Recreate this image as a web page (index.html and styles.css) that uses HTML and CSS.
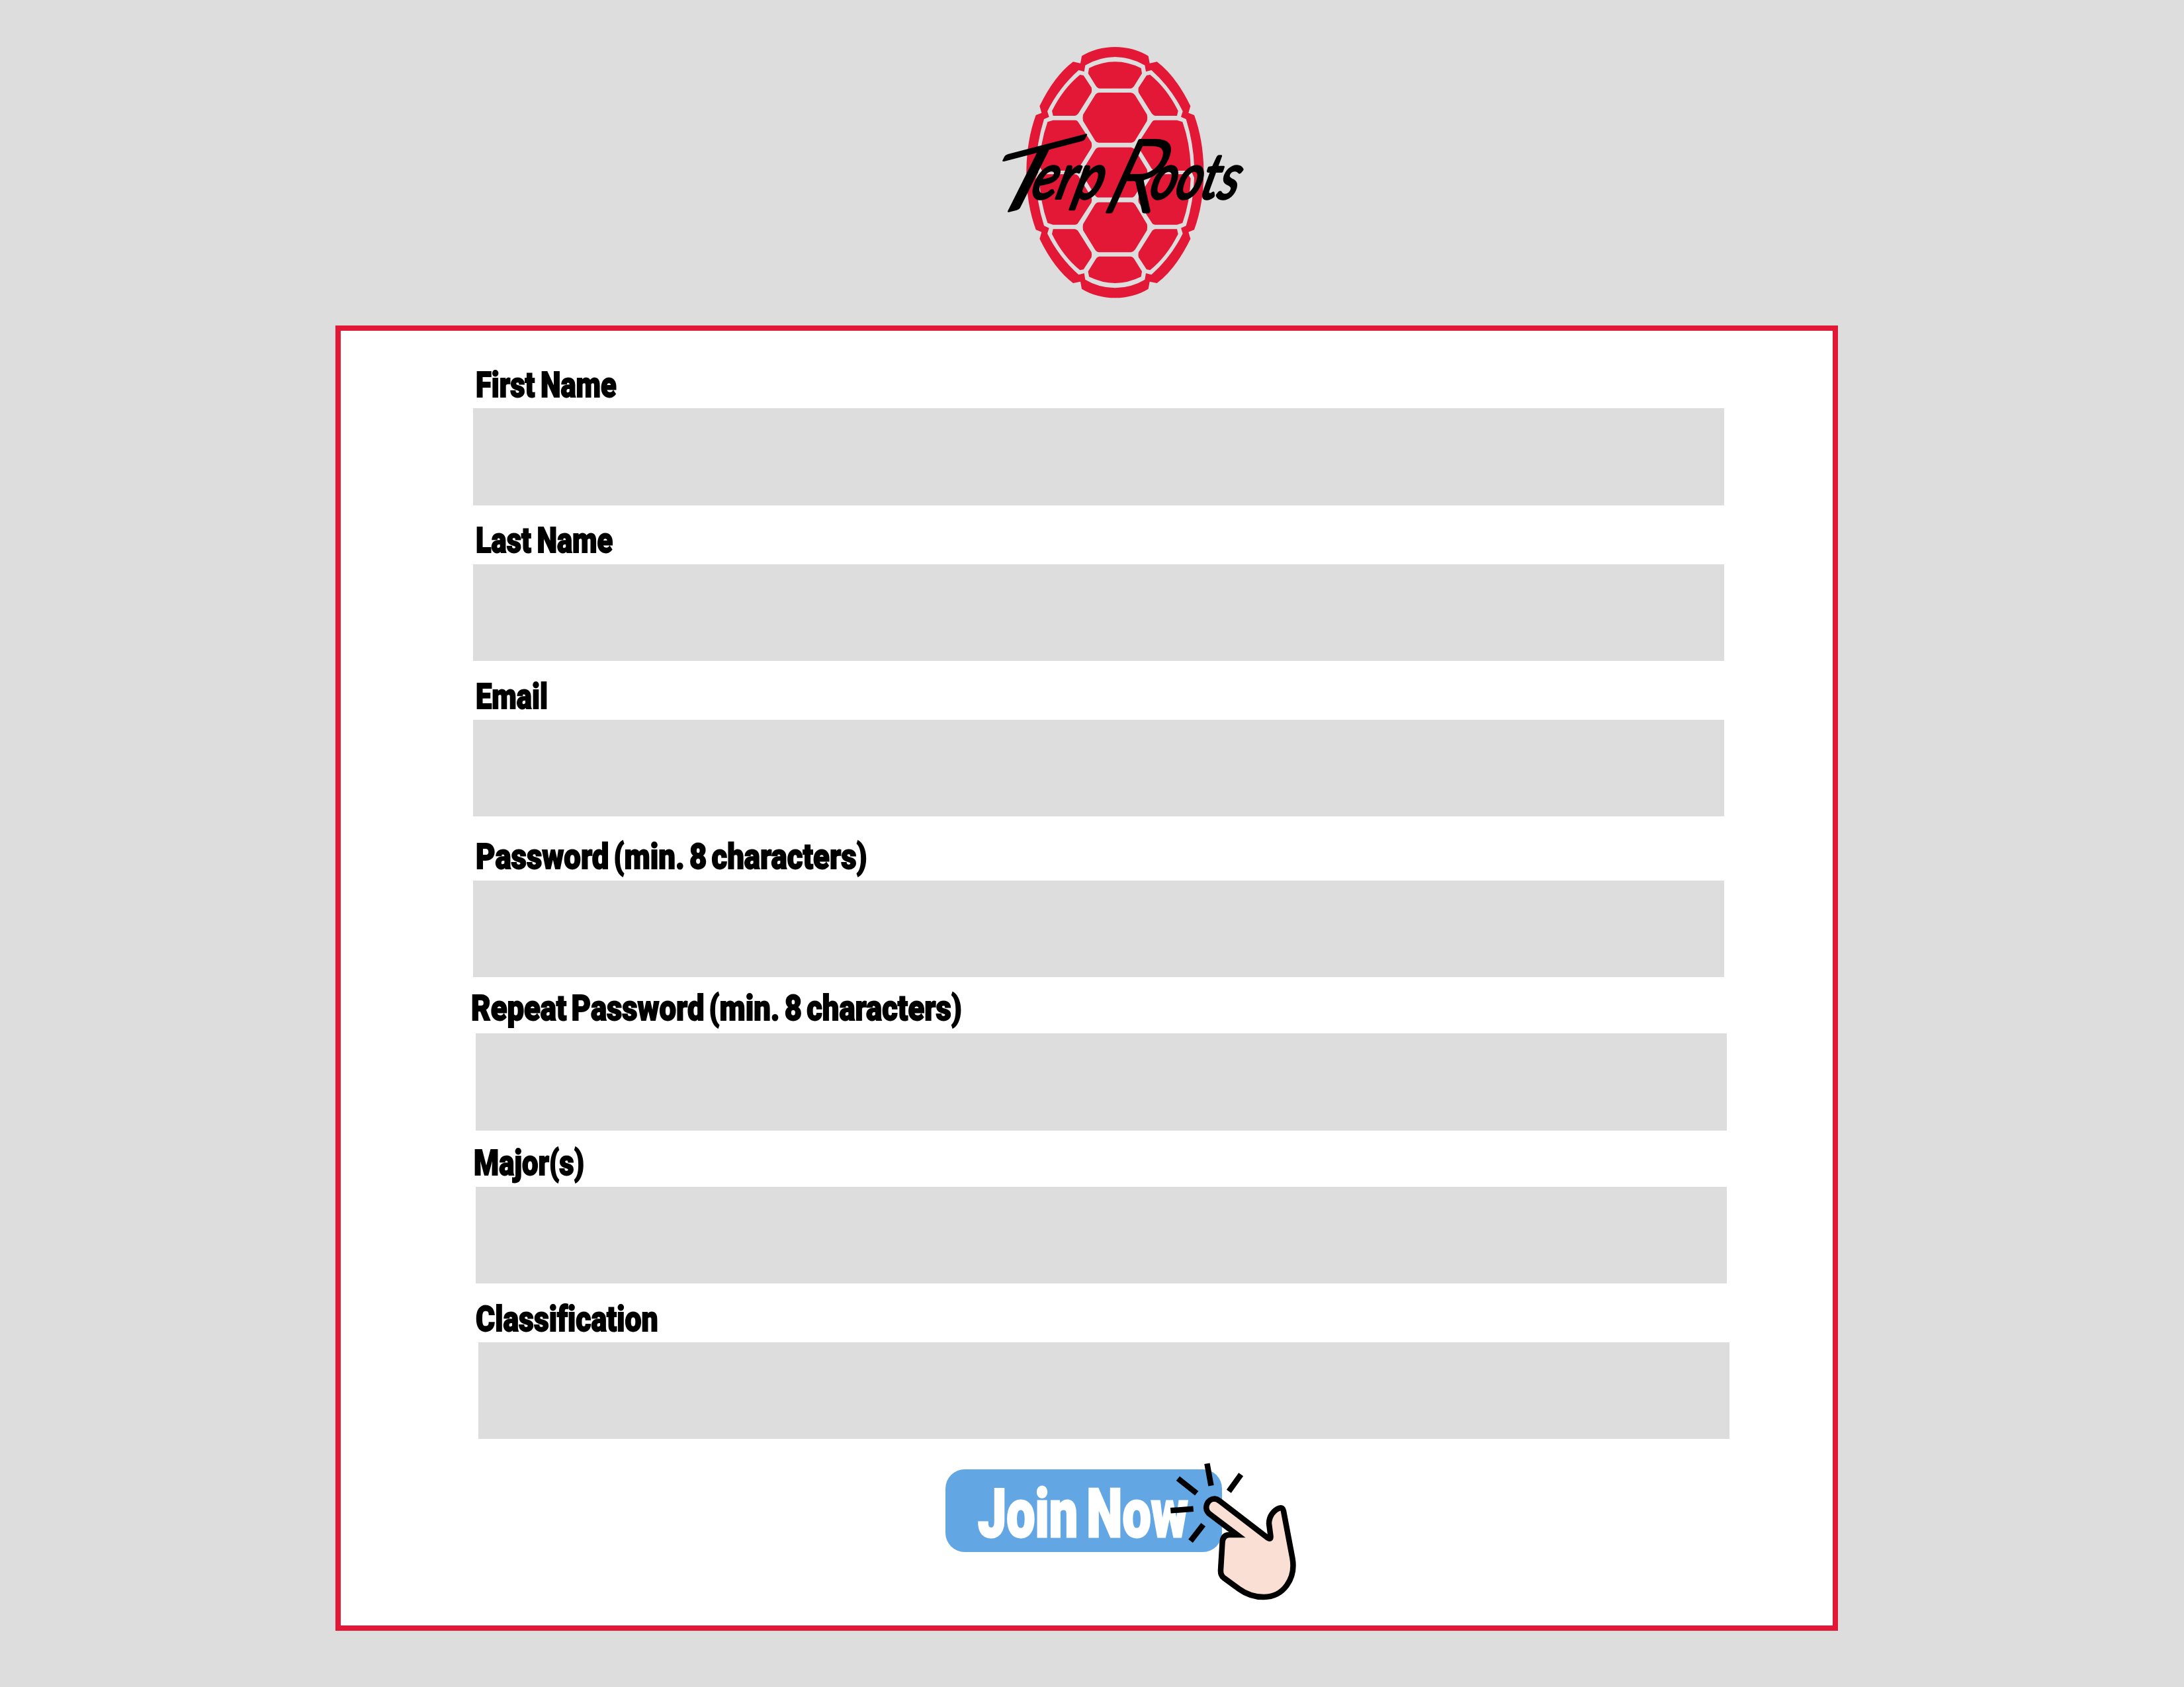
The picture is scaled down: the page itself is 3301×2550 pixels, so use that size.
FILE: index.html
```html
<!DOCTYPE html>
<html lang="en">
<head>
<meta charset="utf-8">
<title>TerpRoots – Join</title>
<link rel="stylesheet" href="styles.css">
</head>
<body>
<header class="masthead">
  <svg class="logo" viewBox="0 0 1200 1200" role="img" aria-label="TerpRoots">
    <defs>
      <g id="half">
        <path class="red" d="M557 33Q470 34 405 74L399 107L366 100Q280 165 214 301L223 332L197 342Q154 460 154 603H557Z"/>
        <path class="gap" d="M557 78Q480 80 421 116L416 145L391 138Q300 220 249 325L257 350L234 360Q200 470 197 578L208 603H557Z"/>
        <path class="red" d="M413 162L449 217Q452 228 449 240L390 334Q382 345 372 345H275L270 323Q320 222 397 159Z"/>
        <path class="red" d="M275 365H375Q385 365 390 375L449 466Q452 478 449 490L390 585Q383 594 372 594H225L213 575Q216 470 250 373Z"/>
      </g>
      <g id="top">
        <use href="#half"/>
        <use href="#half" transform="matrix(-1 0 0 1 1112 0)"/>
        <path class="red" d="M438 129Q556 71 674 129L678 153L644 208Q637 220 627 221H485Q475 220 468 208L434 153Z"/>
        <path id="hex" class="red" d="M485 240H628Q640 242 647 252L701 340Q704 354 701 368L647 457Q640 467 630 467H482Q472 467 465 457L411 368Q408 354 411 340L465 252Q472 240 485 240Z"/>
      </g>
    </defs>
    <use href="#top"/>
    <use href="#top" transform="matrix(1 0 0 -1 0 1204)"/>
    <use href="#hex" transform="translate(0 248.500)"/>
    <g class="script">
      <text class="cap" transform="matrix(.96 -.25 -.465 .93 -88 818)" textLength="385" lengthAdjust="spacingAndGlyphs">T</text>
      <text class="low" transform="translate(168 720) skewX(-15)" textLength="320" lengthAdjust="spacingAndGlyphs">erp</text>
      <text class="cap big" transform="matrix(1 0 -.42 .93 480 780)" textLength="235" lengthAdjust="spacingAndGlyphs">R</text>
      <text class="low" transform="translate(704 720) skewX(-15)" textLength="400" lengthAdjust="spacingAndGlyphs">oots</text>
    </g>
  </svg>
</header>
<main class="card">
  <form class="form">
    <div class="field f1"><label for="a"><span>First Name</span></label><input id="a"></div>
    <div class="field f2"><label for="b"><span>Last Name</span></label><input id="b"></div>
    <div class="field f3"><label for="c"><span>Email</span></label><input id="c"></div>
    <div class="field f4"><label for="d"><span>Password (min. 8 characters)</span></label><input id="d"></div>
    <div class="field f5"><label for="e"><span>Repeat Password (min. 8 characters)</span></label><input id="e"></div>
    <div class="field f6"><label for="f"><span>Major(s)</span></label><input id="f"></div>
    <div class="field f7"><label for="g"><span>Classification</span></label><input id="g"></div>
    <div class="join">
      <button type="button"><span>Join Now</span></button>
      <svg class="pointer" viewBox="0 0 220 225" aria-hidden="true">
        <path class="rays" d="M74.400 7.300L80.500 40.700M125.700 23.700L107.300 49.300M30.400 29.700L58.700 52.300M19.300 78.300L53.700 75.700M68.700 99.700L49.500 124.300"/>
        <path class="hand" d="M93.200 63.700L166 119.500Q171 123 170.500 117L168 98C168 86 176 77 184 74.500Q189 73 190 79L203.400 150C209 181 190 209 160 209C145 209 134 205 122.600 196.700L99.700 180Q94.500 176 95 168L97.500 127Q98 115 108 115H120L77 82.500C69 74 75 60.500 86 60.500Q90 61 93.200 63.700Z"/>
      </svg>
    </div>
  </form>
</main>
</body>
</html>
```
FILE: styles.css
```css
* { box-sizing: border-box; }

body {
  margin: 0;
  width: 3301px;
  height: 2550px;
  background: #ddd;
  font-family: Roboto, "Liberation Sans", sans-serif;
}

.masthead {
  height: 491.6px;
  padding: 60px 0 0 1500px;
}

.logo {
  display: block;
  width: 400px;
  height: 400px;
  overflow: visible;
}

.red { fill: #e31837; }
.gap { fill: #ddd; }

.script {
  font-family: Lato, sans-serif;
  fill: #000;
  stroke: #000;
  stroke-linejoin: round;
}
.cap { font-size: 440px; font-weight: 300; stroke-width: 16; }
.big { font-size: 490px; }
.low { font-size: 285px; font-style: italic; font-weight: 400; stroke-width: 12; }

.card {
  width: 2271px;
  height: 1973px;
  margin-left: 507px;
  border: 8.4px solid #e31837;
  background: #fff;
}

.form {
  display: flex;
  flex-direction: column;
  padding: 55.3px 0 0 200px;
}

.field {
  width: 1891px;
  margin-bottom: 26.6px;
}

.field label {
  display: block;
  height: 56px;
  margin-bottom: 6px;
  padding-left: 4px;
  font-size: 54.4px;
  font-weight: 900;
  line-height: 54px;
  white-space: nowrap;
  word-spacing: -3px;
  font-variant-ligatures: none;
  -webkit-text-stroke: 1.8px currentColor;
}

.field span,
.join span {
  display: inline-block;
  transform: scaleX(var(--fit, .8));
  transform-origin: 0 50%;
}

.field input {
  display: block;
  width: 100%;
  height: 146.3px;
  margin-top: 6.500px;
  padding: 0 24px;
  border: 0;
  border-radius: 0;
  background: #ddd;
  font: 48px Roboto, sans-serif;
}

.field.f4 label, .field.f5 label { word-spacing: -5px; }
.f4 { --fit: .837; }
.f5 { --fit: .835; }
.f6 { --fit: .8; }
.f7 { --fit: .818; }
.f3 { margin-bottom: 34px; }
.f4 { margin-bottom: 20px; }
.f5 { margin-left: 4px; margin-bottom: 22.700px; }
.f5 label { margin-left: -11px; }
.f5 input { margin-top: 9px; }
.f6 { margin-left: 4px; }
.f6 label { margin-left: -7.500px; }
.f7 { margin-left: 7.500px; margin-bottom: 45.300px; }
.f7 label { margin-left: -7.500px; }

.join {
  --fit: .755;
  position: relative;
  width: 418px;
  margin-left: 714px;
}

.join button {
  display: block;
  width: 418px;
  height: 125.700px;
  padding: 5px 0 0 49px;
  border: 0;
  border-radius: 29px;
  background: #62a6e4;
  color: #fff;
  font: 900 102px/125px Roboto, "Liberation Sans", sans-serif;
  text-align: left;
  white-space: nowrap;
  word-spacing: -8px;
  -webkit-text-stroke: 3px currentColor;
}

.pointer {
  position: absolute;
  left: 320.500px;
  top: -15.300px;
  width: 220px;
  height: 225px;
}

.rays {
  fill: none;
  stroke: #000;
  stroke-width: 8.500;
}

.hand {
  fill: #fae0d4;
  stroke: #000;
  stroke-width: 8.500;
  stroke-miterlimit: 12;
}
```
